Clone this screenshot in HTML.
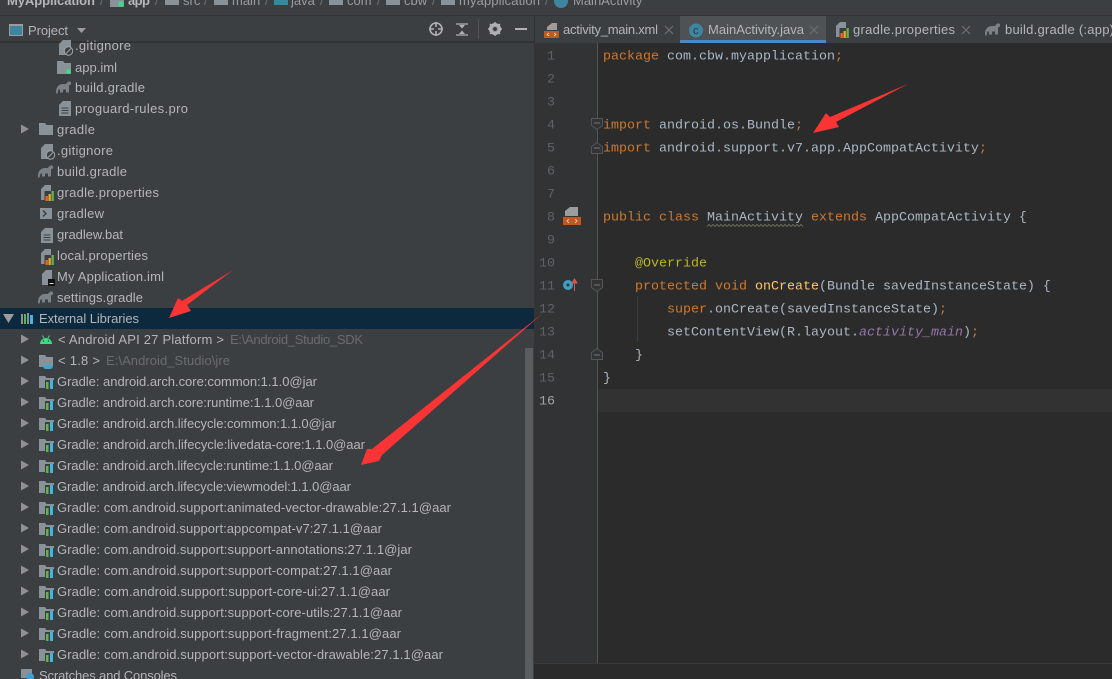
<!DOCTYPE html>
<html><head><meta charset="utf-8"><style>
html,body{margin:0;padding:0;background:#3c3f41}
#p{position:relative;width:1112px;height:679px;overflow:hidden;background:#3c3f41;font-family:"Liberation Sans","Noto Sans CJK SC",sans-serif;font-size:13px;color:#bbb}
svg{position:absolute;left:0;top:0}
text{font-family:"Liberation Sans","Noto Sans CJK SC",sans-serif;font-size:13px;fill:#b4b6b8}
.m text,text.m{font-family:"Liberation Mono",monospace;font-size:13.33px}
.k{fill:#cc7832}.i{fill:#a9b7c6}
.g{fill:#606366;font-family:"Liberation Mono",monospace;font-size:13.33px}
.d{fill:#9a9c9e}.s{fill:#6e6e6e}.e{fill:#6a6c6e}
</style></head><body><div id="p">
<svg width="1112" height="679" viewBox="0 0 1112 679">
<defs>
<g id="tri"><path d="M0 .5L8 5L0 9.500Z" fill="#8f9193"/></g>
<g id="dir"><path d="M0 1h6l1.500 2H14v10H0Z" fill="#8a9299"/></g>
<g id="gl"><path d="M0 1h6l1.500 2H15v10H0Z" fill="#8a9299"/><rect x="6" y="5" width="9" height="9" fill="#3c3f41"/><rect x="3.500" y="6" width="2" height="7" fill="#8a9299"/><rect x="7" y="7" width="2.500" height="7" fill="#62b543"/><rect x="11" y="5" width="3" height="9" fill="#40b6e0"/></g>
<g id="gr"><path d="M0 12C0 7 3 4 7 4h3c1-2 3-3 4-2.500 1.500.5 1.500 3 0 3.500l-1 .5v7h-3v-3H7v3H4v-3H2.500L1.500 13.500H0Z" fill="#7a8288"/></g>
<g id="doc"><path d="M5 0H13V15H1V4Z" fill="#8a9299"/><path d="M3.500 7h7M3.500 9.500h7M3.500 12h7" stroke="#3c3f41"/></g>
<g id="prop"><path d="M5 0H11V15H1V4Z" fill="#8a9299"/><rect x="4.500" y="6" width="10" height="10" fill="#3c3f41"/><rect x="5.500" y="11" width="2.300" height="5" fill="#f26522"/><rect x="8.500" y="9" width="2.300" height="7" fill="#f0a732"/><rect x="11.500" y="6" width="2.300" height="10" fill="#62b543"/></g>
<g id="ign"><path d="M5 0H13V15H1V4Z" fill="#8a9299"/><circle cx="10.500" cy="11" r="4.200" fill="#3c3f41" stroke="#a0a4a8"/><path d="M8 13.500L13 8.500" stroke="#a0a4a8"/></g>
<g id="x"><path d="M0 0L8 8M8 0L0 8" stroke="#6e7073" stroke-width="1.200"/></g>
<pattern id="sq" x="707" y="224" width="4" height="3" patternUnits="userSpaceOnUse"><path d="M0 2.500L2 .5L4 2.500" fill="none" stroke="#8a8a70" stroke-width=".7"/></pattern>
</defs>

<!-- breadcrumb -->
<rect width="1112" height="15" fill="#3c3f41"/>
<rect y="15" width="1112" height="1" fill="#323232"/>
<text x="7" y="5" style="font-weight:700" textLength="88">MyApplication</text>
<text x="100" y="5" class="s">/</text>
<path d="M110 -2h14v9h-14Z" fill="#8a9299"/><circle cx="121" cy="4" r="2.800" fill="#3ddc84"/>
<text x="128" y="5" style="font-weight:700" textLength="22">app</text>
<text x="155" y="5" class="s">/</text>
<rect x="165" y="-2" width="14" height="7" fill="#8a9299"/><text x="183" y="5" class="d">src</text>
<text x="204" y="5" class="s">/</text>
<rect x="214" y="-2" width="14" height="7" fill="#8a9299"/><text x="232" y="5" class="d">main</text>
<text x="265" y="5" class="s">/</text>
<rect x="274" y="-2" width="14" height="7" fill="#3e86a0"/><text x="291" y="5" class="d">java</text>
<text x="320" y="5" class="s">/</text>
<rect x="329" y="-2" width="14" height="7" fill="#8a9299"/><text x="347" y="5" class="d">com</text>
<text x="377" y="5" class="s">/</text>
<rect x="386" y="-2" width="14" height="7" fill="#8a9299"/><text x="404" y="5" class="d">cbw</text>
<text x="432" y="5" class="s">/</text>
<rect x="441" y="-2" width="14" height="7" fill="#8a9299"/><text x="459" y="5" class="d" textLength="81">myapplication</text>
<text x="545" y="5" class="s">/</text>
<circle cx="561" cy="1" r="7" fill="#3e86a0"/>
<text x="573" y="5" class="d">MainActivity</text>

<!-- project toolbar -->
<rect y="41" width="534" height="2" fill="#323232"/>
<rect x="9.500" y="24.500" width="13" height="11" fill="#3e86a0" stroke="#9a9c9e"/>
<rect x="9" y="24" width="14" height="2" fill="#9a9c9e"/>
<text x="28" y="35" textLength="40">Project</text>
<path d="M77 28h9l-4.500 5Z" fill="#9a9c9e"/>
<circle cx="436" cy="29" r="6" fill="none" stroke="#afb1b3" stroke-width="1.600"/>
<path d="M436 22v5M436 31v5M429 29h5M438 29h5" stroke="#afb1b3" stroke-width="1.600"/>
<path d="M456 24h12M456 35h12" stroke="#afb1b3" stroke-width="1.200"/>
<path d="M459 25h6l-3 3.500ZM459 34h6l-3-3.500Z" fill="#afb1b3"/>
<rect x="478" y="19" width="1" height="20" fill="#515355"/>
<circle cx="495" cy="29" r="4.500" fill="none" stroke="#afb1b3" stroke-width="3"/>
<path d="M495 22v14M488 29h14M490 24l10 10M500 24l-10 10" stroke="#afb1b3" stroke-width="1.500"/>
<circle cx="495" cy="29" r="2" fill="#3c3f41"/>
<rect x="515" y="28" width="12" height="2" fill="#afb1b3"/>

<!-- tree -->
<rect y="308" width="534" height="21" fill="#0d293e"/>
<use href="#ign" x="58" y="40"/><text x="75" y="50" textLength="56">.gitignore</text>
<path d="M57 61h6l1.500 2H71v11H57Z" fill="#8a9299"/><circle cx="68.500" cy="71.500" r="2.500" fill="#3ddc84"/><text x="75" y="72" textLength="42">app.iml</text>
<use href="#gr" x="56" y="80"/><text x="75" y="92" textLength="70">build.gradle</text>
<use href="#doc" x="58" y="101"/><text x="75" y="113" textLength="113">proguard-rules.pro</text>
<use href="#tri" x="21" y="124"/><use href="#dir" x="39" y="122"/><text x="57" y="134" textLength="38">gradle</text>
<use href="#ign" x="40" y="144"/><text x="57" y="155" textLength="56">.gitignore</text>
<use href="#gr" x="38" y="164"/><text x="57" y="176" textLength="70">build.gradle</text>
<use href="#prop" x="40" y="185"/><text x="57" y="197" textLength="102">gradle.properties</text>
<rect x="40" y="208" width="12" height="11" fill="#8a9299"/><path d="M43 210.500l3 3-3 3" stroke="#3c3f41" stroke-width="1.500" fill="none"/><text x="57" y="218" textLength="47">gradlew</text>
<use href="#doc" x="40" y="228"/><text x="57" y="239" textLength="66">gradlew.bat</text>
<use href="#prop" x="40" y="249"/><text x="57" y="260" textLength="91">local.properties</text>
<path d="M46 270H52V285H42V274Z" fill="#8a9299"/><rect x="48" y="279" width="7" height="7" fill="#111"/><rect x="49.500" y="283" width="4" height="1" fill="#ddd"/><text x="57" y="281" textLength="107">My Application.iml</text>
<use href="#gr" x="38" y="290"/><text x="57" y="302" textLength="86">settings.gradle</text>
<path d="M3 314h11l-5.500 9Z" fill="#9a9c9e"/>
<rect x="21" y="314" width="2" height="10" fill="#8a9299"/><rect x="24" y="314" width="2" height="10" fill="#62b543"/><rect x="27" y="313" width="2" height="11" fill="#8a9299"/><rect x="30" y="315" width="3" height="9" fill="#40b6e0"/>
<text x="39" y="323" textLength="100">External Libraries</text>
<use href="#tri" x="21" y="334"/>
<path d="M40 344a6 6 0 0 1 12 0Z" fill="#3ddc84"/><path d="M42.500 335.500l1.500 2.500M49.500 335.500l-1.500 2.500" stroke="#3ddc84"/><circle cx="43.500" cy="341" r=".8" fill="#3c3f41"/><circle cx="48.500" cy="341" r=".8" fill="#3c3f41"/>
<text x="58" y="344" textLength="166">&lt; Android API 27 Platform &gt;</text><text x="230" y="344" class="e" textLength="133">E:\Android_Studio_SDK</text>
<use href="#tri" x="21" y="355"/>
<path d="M39 355h6l1.500 2H53v10H39Z" fill="#8a9299"/><path d="M43 365h10v1a3 3 0 0 1-3 3h-4a3 3 0 0 1-3-3Z" fill="#40a6d0"/><text x="58" y="365" textLength="42">&lt; 1.8 &gt;</text><text x="106" y="365" class="e" textLength="124">E:\Android_Studio\jre</text>

<use href="#tri" x="21" y="376"/><use href="#gl" x="39" y="375"/><text x="57" y="386" textLength="260">Gradle: android.arch.core:common:1.1.0@jar</text>
<use href="#tri" x="21" y="397"/><use href="#gl" x="39" y="396"/><text x="57" y="407" textLength="257">Gradle: android.arch.core:runtime:1.1.0@aar</text>
<use href="#tri" x="21" y="418"/><use href="#gl" x="39" y="417"/><text x="57" y="428" textLength="279">Gradle: android.arch.lifecycle:common:1.1.0@jar</text>
<use href="#tri" x="21" y="439"/><use href="#gl" x="39" y="438"/><text x="57" y="449" textLength="308">Gradle: android.arch.lifecycle:livedata-core:1.1.0@aar</text>
<use href="#tri" x="21" y="460"/><use href="#gl" x="39" y="459"/><text x="57" y="470" textLength="276">Gradle: android.arch.lifecycle:runtime:1.1.0@aar</text>
<use href="#tri" x="21" y="481"/><use href="#gl" x="39" y="480"/><text x="57" y="491" textLength="294">Gradle: android.arch.lifecycle:viewmodel:1.1.0@aar</text>
<use href="#tri" x="21" y="502"/><use href="#gl" x="39" y="501"/><text x="57" y="512" textLength="394">Gradle: com.android.support:animated-vector-drawable:27.1.1@aar</text>
<use href="#tri" x="21" y="523"/><use href="#gl" x="39" y="522"/><text x="57" y="533" textLength="325">Gradle: com.android.support:appcompat-v7:27.1.1@aar</text>
<use href="#tri" x="21" y="544"/><use href="#gl" x="39" y="543"/><text x="57" y="554" textLength="355">Gradle: com.android.support:support-annotations:27.1.1@jar</text>
<use href="#tri" x="21" y="565"/><use href="#gl" x="39" y="564"/><text x="57" y="575" textLength="335">Gradle: com.android.support:support-compat:27.1.1@aar</text>
<use href="#tri" x="21" y="586"/><use href="#gl" x="39" y="585"/><text x="57" y="596" textLength="333">Gradle: com.android.support:support-core-ui:27.1.1@aar</text>
<use href="#tri" x="21" y="607"/><use href="#gl" x="39" y="606"/><text x="57" y="617" textLength="345">Gradle: com.android.support:support-core-utils:27.1.1@aar</text>
<use href="#tri" x="21" y="628"/><use href="#gl" x="39" y="627"/><text x="57" y="638" textLength="344">Gradle: com.android.support:support-fragment:27.1.1@aar</text>
<use href="#tri" x="21" y="649"/><use href="#gl" x="39" y="648"/><text x="57" y="659" textLength="386">Gradle: com.android.support:support-vector-drawable:27.1.1@aar</text>
<rect x="21" y="669" width="11" height="9" fill="#8a9299"/><circle cx="30" cy="677" r="4" fill="#3e9fd0"/><text x="39" y="680" textLength="138">Scratches and Consoles</text>
<rect x="525" y="348" width="8" height="331" fill="#5a5c5e"/>

<!-- editor -->
<rect x="534" y="16" width="578" height="27" fill="#3c3f41"/>
<rect x="534" y="16" width="1" height="27" fill="#323232"/>
<rect x="680" y="16" width="146" height="26" fill="#4e5254"/>
<rect x="680" y="40" width="146" height="3" fill="#4a88c7"/>
<rect x="534" y="43" width="578" height="636" fill="#2b2b2b"/>
<rect x="534" y="43" width="63" height="620" fill="#313335"/>
<rect x="597" y="43" width="1" height="620" fill="#555"/>
<rect x="534" y="663" width="578" height="1" fill="#3a3a3a"/>
<rect x="598" y="389" width="514" height="23" fill="#323232"/>

<!-- tabs -->
<path d="M552 23h5v7h-10v-3Z" fill="#9a9c9e"/><rect x="544" y="31" width="15" height="7" fill="#c2581f"/><path d="M549 33l-2 1.500 2 1.500M554 33l2 1.500-2 1.500" stroke="#ddd" fill="none" stroke-width=".8"/>
<text x="563" y="34" textLength="95">activity_main.xml</text>
<use href="#x" x="665" y="26"/>
<circle cx="696" cy="30.500" r="7" fill="#3e86a0"/><text x="693" y="34" style="font-size:11px;fill:#1f3a47">c</text>
<text x="708" y="34" textLength="96">MainActivity.java</text>
<use href="#x" x="810" y="26"/>
<use href="#prop" x="835" y="22"/>
<text x="853" y="34" textLength="102">gradle.properties</text>
<use href="#x" x="962" y="26"/>
<use href="#gr" x="985" y="22"/>
<text x="1005" y="34" textLength="109">build.gradle (:app)</text>

<!-- gutter numbers -->
<g text-anchor="end" transform="translate(0,1.500)">
<text class="g" x="555" y="58">1</text><text class="g" x="555" y="81">2</text><text class="g" x="555" y="104">3</text><text class="g" x="555" y="127">4</text><text class="g" x="555" y="150">5</text><text class="g" x="555" y="173">6</text><text class="g" x="555" y="196">7</text><text class="g" x="555" y="219">8</text><text class="g" x="555" y="242">9</text><text class="g" x="555" y="265">10</text><text class="g" x="555" y="288">11</text><text class="g" x="555" y="311">12</text><text class="g" x="555" y="334">13</text><text class="g" x="555" y="357">14</text><text class="g" x="555" y="380">15</text><text class="g" x="555" y="403" style="fill:#a4a3a3">16</text>
</g>
<!-- fold marks -->
<g fill="#313335" stroke="#555">
<path d="M591.500 118.500h11v7l-5.500 4-5.500-4Z"/><path d="M591.500 153.500h11v-7l-5.500-4-5.500 4Z"/>
<path d="M591.500 279.500h11v8l-5.500 4-5.500-4Z"/><path d="M591.500 359.500h11v-7l-5.500-4-5.500 4Z"/>
</g>
<path d="M594 123h6M594 148h6M594 285h6M594 355h6" stroke="#777"/>
<!-- gutter icons -->
<path d="M570 207h8v9h-13v-5Z" fill="#9a9c9e"/><rect x="563" y="217" width="18" height="8" fill="#c2581f"/><path d="M569 219l-2 2 2 2M575 219l2 2-2 2" stroke="#ddd" fill="none" stroke-width=".8"/>
<circle cx="568" cy="285" r="5" fill="#3e9fc4"/><circle cx="568" cy="285" r="1.500" fill="#313335"/>
<path d="M574.500 291v-11M572 283l2.500-4 2.500 4Z" stroke="#d9534f" fill="#d9534f"/>
<rect x="637" y="296" width="1" height="46" fill="#3b3b3b"/>

<!-- code -->
<g class="m" transform="translate(0,.5)">
<text x="603" y="59"><tspan class="k">package</tspan><tspan class="i"> com.cbw.myapplication</tspan><tspan class="k">;</tspan></text>
<text x="603" y="128"><tspan class="k">import</tspan><tspan class="i"> android.os.Bundle</tspan><tspan class="k">;</tspan></text>
<text x="603" y="151"><tspan class="k">import</tspan><tspan class="i"> android.support.v7.app.AppCompatActivity</tspan><tspan class="k">;</tspan></text>
<text x="603" y="220"><tspan class="k">public class </tspan><tspan class="i">MainActivity </tspan><tspan class="k">extends </tspan><tspan class="i">AppCompatActivity {</tspan></text>
<text x="635" y="266" style="fill:#bbb529">@Override</text>
<text x="635" y="289"><tspan class="k">protected void </tspan><tspan style="fill:#ffc66d">onCreate</tspan><tspan class="i">(Bundle savedInstanceState) {</tspan></text>
<text x="667" y="312"><tspan class="k">super</tspan><tspan class="i">.onCreate(savedInstanceState)</tspan><tspan class="k">;</tspan></text>
<text x="667" y="335"><tspan class="i">setContentView(R.layout.</tspan><tspan style="fill:#9876aa;font-style:italic">activity_main</tspan><tspan class="i">)</tspan><tspan class="k">;</tspan></text>
<text x="635" y="358" class="i">}</text>
<text x="603" y="381" class="i">}</text>
</g>
<rect x="707" y="224" width="96" height="3" fill="url(#sq)"/>

<!-- arrows -->
<path d="M908 84L836 122L839 127L813 133L826 113L830 117Z" fill="#f93434"/>
<path d="M233 270L187 305L191 311L169 318L178 298L182 301Z" fill="#f93434"/>
<path d="M543 313L382 455L379 461L361 465L367 449L372 449Z" fill="#f93434"/>
</svg>
</div></body></html>
